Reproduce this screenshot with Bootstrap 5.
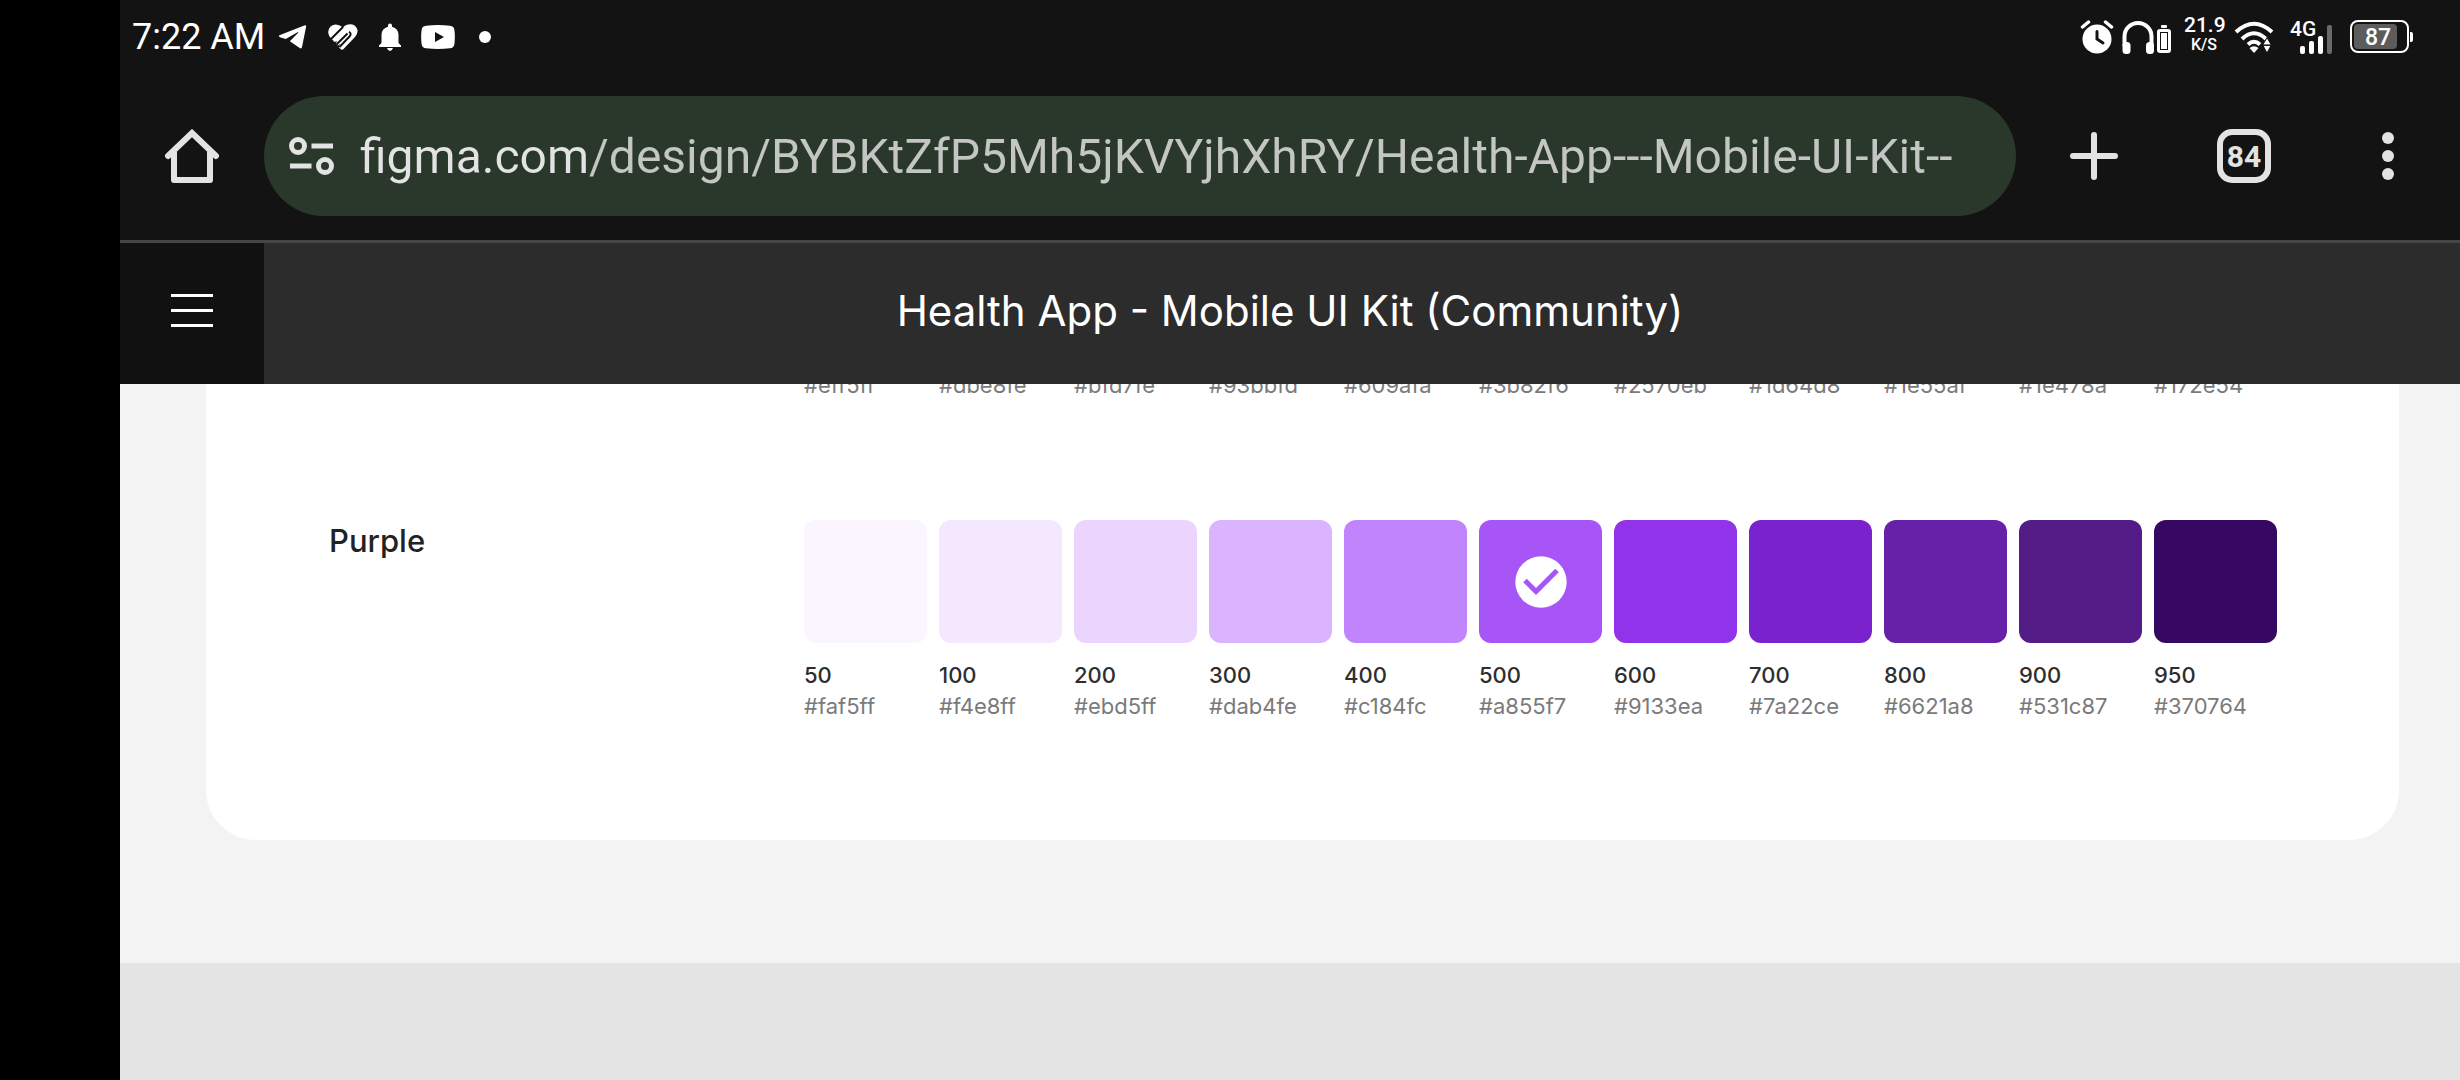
<!DOCTYPE html>
<html lang="en">
<head>
<meta charset="utf-8">
<meta name="viewport" content="width=device-width, initial-scale=1">
<title>Health App - Mobile UI Kit (Community)</title>
<link href="https://cdn.jsdelivr.net/npm/bootstrap@5.3.0/dist/css/bootstrap.min.css" rel="stylesheet">
<style>
  body { font-family: Inter, "Liberation Sans", sans-serif; background: #000; }
  svg { display: block; flex: none; }
  .screen { margin-left: 120px; background: #e4e4e4; overflow: hidden; }
  .chrome-top { background: #131313; border-bottom: 3px solid #464646; font-family: Roboto, "Liberation Sans", sans-serif; }
  .status { height: 72px; padding: 2px 46px 0 12px; color: #fff; }
  .clock { font-size: 36px; line-height: 48px; margin-right: 14px; }
  .notices { gap: 20px; }
  .rate { width: 40px; font-weight: 500; text-align: center; padding-bottom: 6px; margin: 0 10px 0 12px; }
  .rate-num { font-size: 21px; line-height: 22px; }
  .rate-unit { font-size: 16px; line-height: 18px; }
  .bar-row { height: 168px; }
  .tap { width: 144px; height: 120px; padding: 0; border: 0; border-radius: 0; flex: none; display: flex; align-items: center; justify-content: center; }
  .tap-wide { width: 156px; }
  .omni { height: 120px; background: #2a382c; border-radius: 60px; padding: 0 24px; gap: 24px; min-width: 0; }
  .omni input { border: 0; outline: 0; padding: 2px 0 0; min-width: 0; height: 72px; font-size: 48px;
    background: linear-gradient(90deg, #e3e3e3 226px, #c3c6c2 226px); -webkit-background-clip: text; background-clip: text; -webkit-text-fill-color: transparent; }
  .title-row { background: #2c2c2c; color: #fff; }
  .title-row .tap { height: 141px; background: #111; padding-bottom: 6px; }
  .title-row h1 { font-size: 42px; line-height: 48px; font-weight: 400; margin: 0; padding: 0 144px 6px 0; }
  .artboard { background: #f3f3f3; padding: 0 61px 123px 86px; overflow: hidden; }
  .panel { background: #fff; border-radius: 0 0 50px 50px; padding: 0 122px 118px 123px; }
  .palette-name { width: 475px; flex: none; font-size: 31px; line-height: 42px; font-weight: 500; color: #222; margin: 0; }
  .swatches { gap: 12px; }
  .swatches > * { flex: 1 1 0; min-width: 0; }
  .chip { aspect-ratio: 1; border-radius: 12px; margin-bottom: 17px; }
  .step { font-size: 22px; line-height: 31px; font-weight: 500; color: #2e2e2e; }
  .hex { font-size: 22px; line-height: 31px; color: #7a7a7a; }
  .blue-row { margin-top: -14px; margin-bottom: 119px; }
  .below { height: 117px; }
</style>
<script src="https://cdn.jsdelivr.net/npm/bootstrap@5.3.0/dist/js/bootstrap.bundle.min.js"></script>
</head>
<body>
<div class="screen">
  <header class="chrome-top">
    <div class="status d-flex align-items-center">
      <span class="clock">7:22 AM</span>
      <div class="notices d-flex align-items-center">
        <svg width="28" height="28" viewBox="1 0 31 28" fill="#fff"><path d="M1.500 12 29 1.200Q31.300.5 31 2.600L26.500 25Q26 27.600 23.500 26L13 18.600 22 9.500Q23 8 21 9L8.500 16.300 2 14.200Q.2 13.200 1.500 12Z"/></svg>
        <svg width="32" height="28" viewBox="0 0 32 28"><path fill="#fff" d="M16 4.500Q19 1 24 1.200 29 1.800 30.500 7 31 11 28 14L16.500 26Q15 27.300 13.500 26L11.800 24 13 21 10.800 22.500 8.800 20.500 10 18 7.500 19 2.500 13.500Q-.5 8 3.500 3.500 9-1 16 4.500Z"/><path fill="none" stroke="#131313" stroke-width="2" d="M4 16 16 4M9.500 21.500 20.500 10.500M12.500 24 22.500 13.500Q25 10.500 22 8.800"/></svg>
        <svg width="22" height="28" viewBox="0 0 22 28" fill="#fff"><path d="M9 2.500a2 2 0 0 1 4 0v1.300Q19.500 5.500 19.500 12v8L22 22.500V24H0v-1.500L2.500 20v-8Q2.500 5.500 9 3.800ZM8 25h6q-1 3-3 3t-3-3Z"/></svg>
        <svg width="34" height="24" viewBox="0 0 34 24"><path fill="#fff" fill-rule="evenodd" d="M5 .7Q17-.6 29 .7 33 1 33.400 5 34.300 12 33.400 19 33 23 29 23.300 17 24.600 5 23.300 1 23 .6 19-.3 12 .6 5 1 1 5 .7ZM14 7v10l9-5Z"/></svg>
        <svg class="ms-1" width="12" height="12" viewBox="0 0 12 12"><circle cx="6" cy="6" r="6" fill="#fff"/></svg>
      </div>

      <svg class="ms-auto" width="34" height="34" viewBox="0 0 34 34" fill="none" stroke="#fff" stroke-width="3.500" stroke-linecap="round"><circle cx="17" cy="19" r="14.500" fill="#fff" stroke="none"/><path d="M2.500 7 8.500 2M25.500 2l6 5"/><path d="M17 11.500V19l6 4" stroke="#131313" stroke-width="3"/></svg>
      <svg class="ms-2" width="50" height="34" viewBox="0 0 50 34"><path d="M2.500 26V16.500a13.500 13.500 0 0 1 27 0V26" fill="none" stroke="#fff" stroke-width="4"/><rect x=".5" y="22" width="8" height="12" rx="3.500" fill="#fff"/><rect x="24" y="22" width="8" height="12" rx="3.500" fill="#fff"/><rect x="39" y="5" width="6" height="3" rx="1" fill="#fff"/><rect x="35" y="9" width="14" height="24" rx="3" fill="#fff"/><rect x="38.500" y="12.500" width="7" height="17" fill="none" stroke="#131313"/></svg>
      <div class="rate"><div class="rate-num">21.9</div><div class="rate-unit">K/S</div></div>
      <svg class="me-3" width="40" height="34" viewBox="0 0 40 34"><g fill="none" stroke="#fff" stroke-width="4"><path d="M2 12Q20-4.500 38 12M8 19Q20 7.500 32 19M14 24.500Q20 19 26 24.500"/></g><path fill="#fff" stroke="#131313" stroke-width="1" d="M33 17.500l4.300 7.500-4.300 8-4.300-8Z"/><path fill="#fff" d="M20 33l-4.500-5q4.500-3.500 9 0Z"/><path stroke="#131313" stroke-width="1.500" d="M28 25.200h10"/></svg>
      <svg class="me-3" width="44" height="36" viewBox="0 0 44 36" fill="#fff"><text x="0" y="17" font-size="21" font-weight="500" font-family="Roboto, sans-serif">4G</text><rect x="10" y="27" width="5" height="8" rx="2"/><rect x="19" y="22" width="5" height="13" rx="2"/><rect x="28" y="17" width="5" height="18" rx="2"/><rect x="37" y="6" width="5" height="29" rx="2" fill="#6a6a6a"/></svg>
      <svg width="64" height="34" viewBox="0 0 64 34"><rect x="1" y="1" width="57" height="31" rx="7" fill="none" stroke="#fff" stroke-width="2"/><rect x="4" y="4" width="43" height="25" rx="4" fill="#5c5c5c"/><path fill="#fff" d="M60 12h1q2 0 2 2v6q0 2-2 2h-1Z"/><text x="28" y="25" text-anchor="middle" font-size="23" font-weight="500" fill="#fff" font-family="Roboto, sans-serif">87</text></svg>
    </div>
    <div class="bar-row d-flex align-items-center">
      <button class="btn tap" aria-label="Home"><svg width="54" height="54" viewBox="0 0 54 54" fill="none" stroke="#e3e3e3" stroke-width="6" stroke-linejoin="round" stroke-linecap="round"><path d="M3 27 27 4 51 27" stroke-linejoin="miter"/><path d="M9 23V51H45V23" stroke-linecap="butt"/></svg></button>
      <div class="omni d-flex align-items-center flex-fill">
        <svg width="48" height="40" viewBox="0 0 48 40" fill="none" stroke="#e3e3e3" stroke-width="5"><circle cx="10" cy="10" r="6.500"/><circle cx="37" cy="30" r="6.500"/><path d="M23.500 10H45M2 30H23.500"/></svg>
        <input class="flex-fill" type="text" aria-label="Address" value="figma.com/design/BYBKtZfP5Mh5jKVYjhXhRY/Health-App---Mobile-UI-Kit--">
      </div>
      <button class="btn tap tap-wide" aria-label="New tab"><svg width="48" height="48" viewBox="0 0 48 48" stroke="#e3e3e3" stroke-width="6" stroke-linecap="round"><path d="M24 3V45M3 24H45"/></svg></button>
      <button class="btn tap" aria-label="Tabs"><svg width="54" height="54" viewBox="0 0 54 54"><rect x="3" y="3" width="48" height="48" rx="12" fill="none" stroke="#e3e3e3" stroke-width="6"/><text x="27" y="38" text-anchor="middle" font-size="30" font-weight="700" fill="#e3e3e3" font-family="Roboto, sans-serif">84</text></svg></button>
      <button class="btn tap" aria-label="More"><svg width="12" height="48" viewBox="0 0 12 48" fill="#e3e3e3"><circle cx="6" cy="6" r="6"/><circle cx="6" cy="24" r="6"/><circle cx="6" cy="42" r="6"/></svg></button>
    </div>
  </header>

  <div class="title-row d-flex align-items-center">
    <button class="btn tap" aria-label="Menu"><svg width="42" height="33" viewBox="0 0 42 33" fill="#fff"><path d="M0 0H42V3H0ZM0 15H42V18H0ZM0 30H42V33H0Z"/></svg></button>
    <h1 class="flex-fill text-center">Health App - Mobile UI Kit (Community)</h1>
  </div>

  <main>
    <section class="artboard">
      <div class="panel">
        <div class="blue-row d-flex">
          <div class="palette-name"></div>
          <div class="swatches hex d-flex flex-fill">
            <span>#eff5ff</span><span>#dbe8fe</span><span>#bfd7fe</span><span>#93bbfd</span><span>#609afa</span><span>#3b82f6</span><span>#2570eb</span><span>#1d64d8</span><span>#1e55af</span><span>#1e478a</span><span>#172e54</span>
          </div>
        </div>
        <div class="d-flex">
          <h2 class="palette-name">Purple</h2>
          <div class="swatches d-flex flex-fill">
            <div><div class="chip" style="background:#faf5ff"></div><div class="step">50</div><div class="hex">#faf5ff</div></div>
            <div><div class="chip" style="background:#f4e8ff"></div><div class="step">100</div><div class="hex">#f4e8ff</div></div>
            <div><div class="chip" style="background:#ebd5ff"></div><div class="step">200</div><div class="hex">#ebd5ff</div></div>
            <div><div class="chip" style="background:#dab4fe"></div><div class="step">300</div><div class="hex">#dab4fe</div></div>
            <div><div class="chip" style="background:#c184fc"></div><div class="step">400</div><div class="hex">#c184fc</div></div>
            <div><div class="chip d-flex align-items-center justify-content-center" style="background:#a855f7"><svg width="52" height="52" viewBox="0 0 52 52"><circle cx="26" cy="26" r="25.700" fill="#fff"/><path d="M10 24.500 21 35.500 42 14.500" fill="none" stroke="#a855f7" stroke-width="5"/></svg></div><div class="step">500</div><div class="hex">#a855f7</div></div>
            <div><div class="chip" style="background:#9133ea"></div><div class="step">600</div><div class="hex">#9133ea</div></div>
            <div><div class="chip" style="background:#7a22ce"></div><div class="step">700</div><div class="hex">#7a22ce</div></div>
            <div><div class="chip" style="background:#6621a8"></div><div class="step">800</div><div class="hex">#6621a8</div></div>
            <div><div class="chip" style="background:#531c87"></div><div class="step">900</div><div class="hex">#531c87</div></div>
            <div><div class="chip" style="background:#370764"></div><div class="step">950</div><div class="hex">#370764</div></div>
          </div>
        </div>
      </div>
    </section>
    <div class="below"></div>
  </main>
</div>
</body>
</html>
